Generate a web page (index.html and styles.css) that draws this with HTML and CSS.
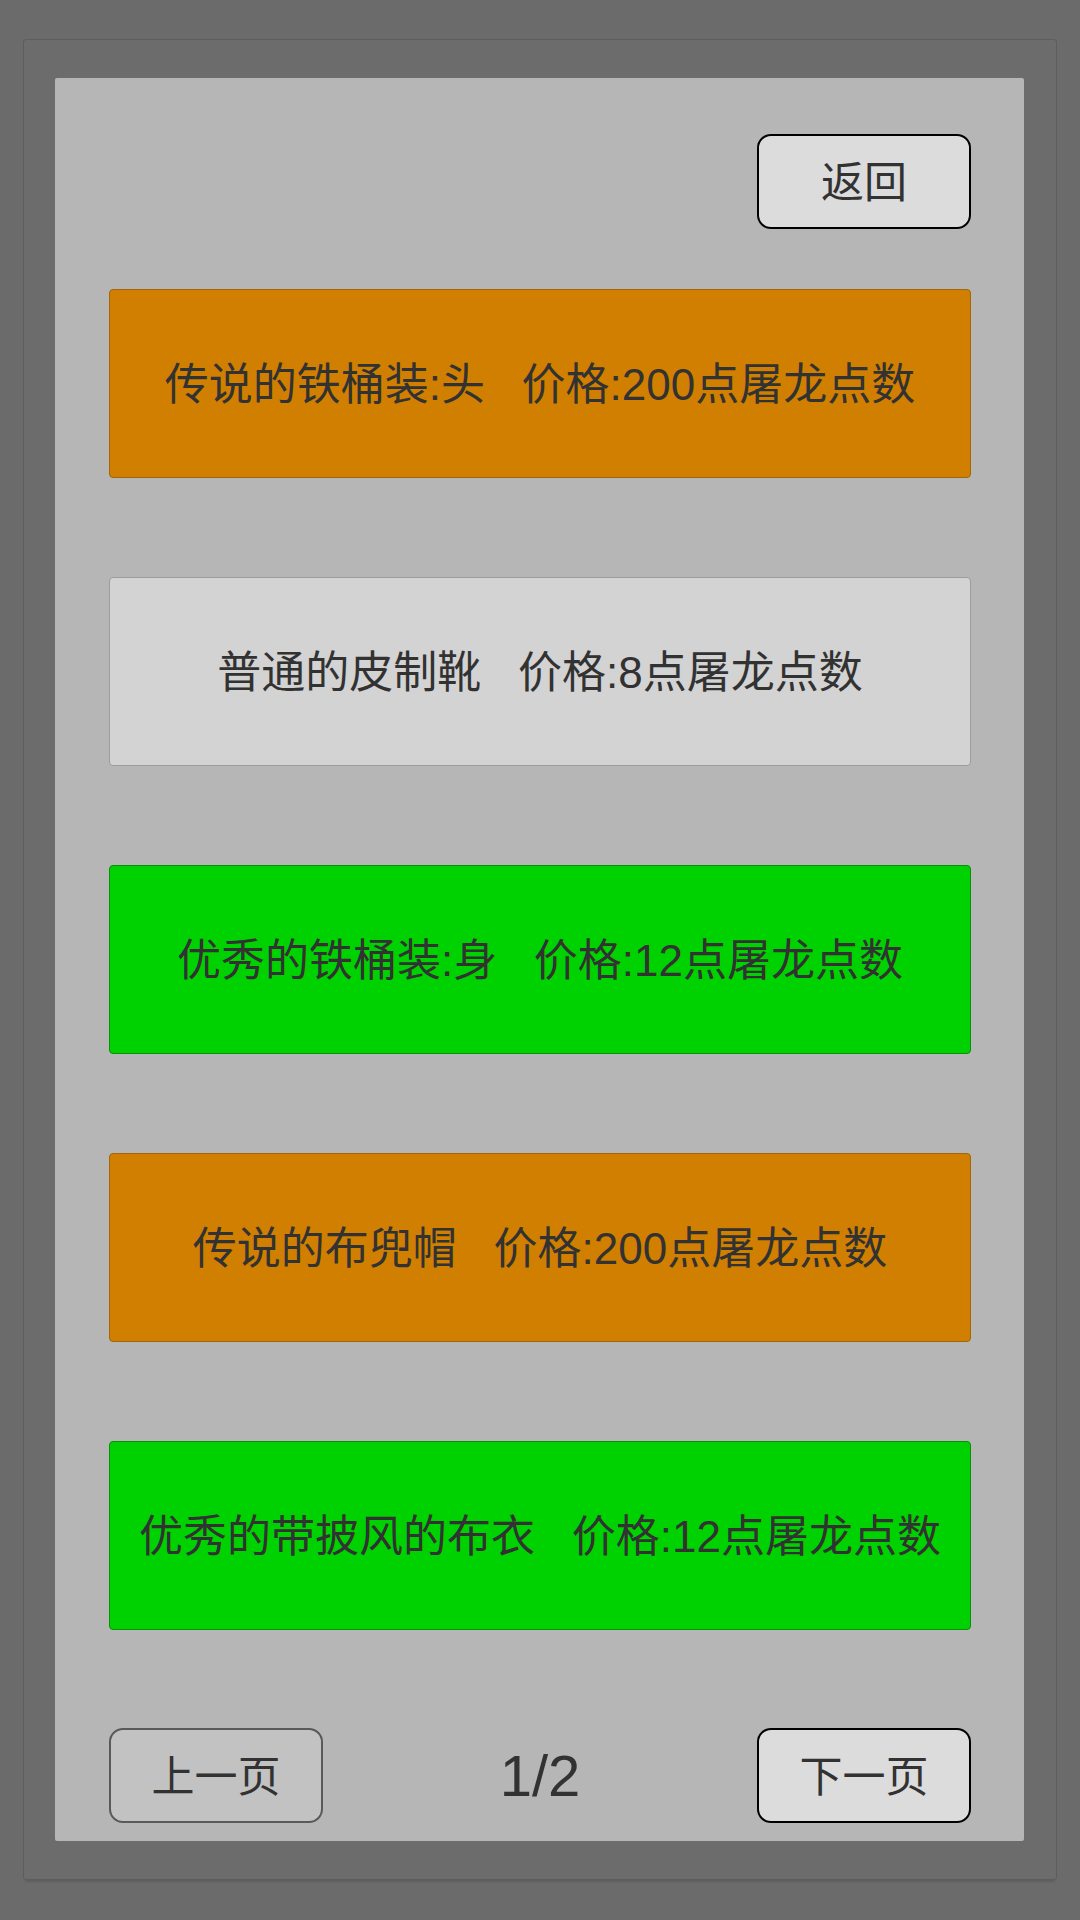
FILE: index.html
```html
<!DOCTYPE html>
<html>
<head>
<meta charset="UTF-8">
<meta name="viewport" content="width=device-width, initial-scale=1.0">
<title>商店</title>
<link rel="stylesheet" href="styles.css">
</head>
<body>
<div class="frame">
  <div class="panel">
    <div class="header">
      <div class="btn btn-active">返回</div>
    </div>
    <div class="list">
      <div class="item legend">传说的铁桶装:头   价格:200点屠龙点数</div>
      <div class="item common">普通的皮制靴   价格:8点屠龙点数</div>
      <div class="item good">优秀的铁桶装:身   价格:12点屠龙点数</div>
      <div class="item legend">传说的布兜帽   价格:200点屠龙点数</div>
      <div class="item good">优秀的带披风的布衣   价格:12点屠龙点数</div>
    </div>
    <div class="footer">
      <div class="btn btn-off">上一页</div>
      <div class="page">1/2</div>
      <div class="btn btn-active">下一页</div>
    </div>
  </div>
</div>
</body>
</html>
```

FILE: styles.css
```css
body {
  margin: 0;
  padding: 39px 23px 0 23px;
  background: #6b6b6b;
  font-family: "Liberation Sans", "Noto Sans CJK SC", sans-serif;
  color: #323232;
  height: 1920px;
  box-sizing: border-box;
  overflow: hidden;
}

.frame {
  width: 1034px;
  height: 1841px;
  box-sizing: border-box;
  border: 1px solid #5d5d5d;
  border-radius: 3px;
  background: #6c6c6c;
  padding: 38px 32px 0 31px;
  box-shadow: 0 4px 2px -2px rgba(0, 0, 0, 0.12);
}

.panel {
  width: 969px;
  height: 1763px;
  box-sizing: border-box;
  background: #b6b6b6;
  border-radius: 2px;
  padding: 56px 53px 18px 54px;
  display: flex;
  flex-direction: column;
}

.header {
  display: flex;
  justify-content: flex-end;
}

.btn {
  width: 214px;
  height: 95px;
  box-sizing: border-box;
  border-radius: 14px;
  display: flex;
  align-items: center;
  justify-content: center;
  font-size: 43px;
  padding-bottom: 6px;
}

.btn-active {
  background: #dcdcdc;
  border: 2px solid #000;
}

.btn-off {
  background: #c2c2c2;
  border: 2px solid #595959;
}

.list {
  margin-top: 60px;
  display: flex;
  flex-direction: column;
  gap: 99px;
}

.item {
  height: 189px;
  box-sizing: border-box;
  border-radius: 4px;
  border: 1px solid;
  display: flex;
  align-items: center;
  justify-content: center;
  font-size: 44px;
  white-space: pre;
  padding-bottom: 6px;
}

.legend {
  background: #d17f00;
  border-color: #a3650c;
}

.common {
  background: #d3d3d3;
  border-color: #9c9c9c;
}

.good {
  background: #00d100;
  border-color: #0a8f0a;
}

.footer {
  margin-top: 98px;
  display: flex;
  justify-content: space-between;
  align-items: center;
}

.page {
  font-size: 58px;
}
```
